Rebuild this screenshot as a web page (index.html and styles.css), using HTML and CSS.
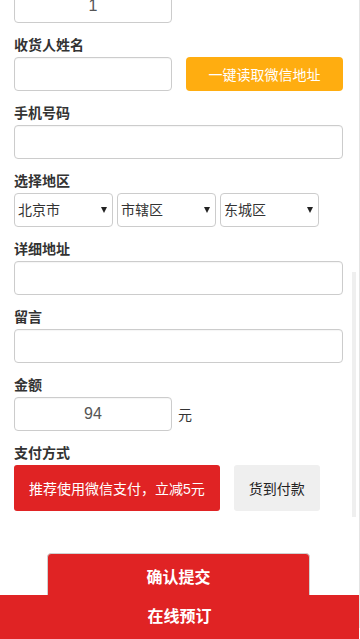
FILE: index.html
```html
<!DOCTYPE html>
<html lang="zh-CN">
<head>
  <meta charset="UTF-8" />
  <meta name="viewport" content="width=device-width, initial-scale=1" />
  <title>在线预订</title>
  <link rel="stylesheet" href="styles.css">
</head>
<body>

  <div class="page">
    <form class="order-form" novalidate>
      <div class="field field-first">
        <input type="text" class="text-input half center" value="1" />
      </div>

      <div class="field">
        <label for="name">收货人姓名</label>
        <div class="row">
          <input type="text" id="name" class="text-input half" />
          <button type="button" class="wx-btn">一键读取微信地址</button>
        </div>
      </div>

      <div class="field">
        <label for="phone">手机号码</label>
        <input type="tel" id="phone" class="text-input" />
      </div>

      <div class="field">
        <label>选择地区</label>
        <div class="row selects">
          <div class="select-box"><select><option>北京市</option></select></div>
          <div class="select-box"><select><option>市辖区</option></select></div>
          <div class="select-box"><select><option>东城区</option></select></div>
        </div>
      </div>

      <div class="field">
        <label for="address">详细地址</label>
        <input type="text" id="address" class="text-input" />
      </div>

      <div class="field">
        <label for="note">留言</label>
        <input type="text" id="note" class="text-input" />
      </div>

      <div class="field">
        <label for="amount">金额</label>
        <div class="row">
          <input type="text" id="amount" class="text-input half center" value="94" />
          <span class="unit">元</span>
        </div>
      </div>

      <div class="field">
        <label>支付方式</label>
        <div class="row pay-row">
          <button type="button" class="pay-btn active">推荐使用微信支付，立减5元</button>
          <button type="button" class="pay-btn">货到付款</button>
        </div>
      </div>

      <div class="submit-wrap">
        <button type="submit" class="submit-btn">确认提交</button>
      </div>
    </form>
  </div>

  <div class="scroll-thumb"></div>

  <div class="bottom-bar">在线预订</div>

</body>
</html>
```

FILE: styles.css
```css
* {
  box-sizing: border-box;
  margin: 0;
  padding: 0;
}

body {
  font-family: 'Liberation Sans', 'Noto Sans CJK SC', sans-serif;
  font-size: 14px;
  color: #333;
  background: #fff;
  overflow: hidden;
}

.page {
  width: 360px;
  min-height: 639px;
  padding: 0 16px 0 14px;
  border-right: 1px solid #e4e4e4;
}

/* page is scrolled a little, first field is cut off */
.order-form {
  margin-top: -11px;
}

.field {
  margin-top: 12px;
}

.field-first {
  margin-top: 0;
}

label {
  display: block;
  font-weight: 700;
  line-height: 20px;
  margin-bottom: 2px;
  color: #333;
}

.row {
  display: flex;
  align-items: center;
}

.text-input {
  display: block;
  width: 100%;
  height: 34px;
  padding: 0 10px;
  border: 1px solid #ccc;
  border-radius: 4px;
  font-family: inherit;
  font-size: 16px;
  color: #555;
  background: #fff;
  box-shadow: inset 0 1px 1px rgba(0, 0, 0, 0.04);
}

.text-input.half {
  width: 158px;
}

.text-input.center {
  text-align: center;
}

.wx-btn {
  width: 157px;
  height: 34px;
  margin-left: auto;
  border: none;
  border-radius: 4px;
  background: #ffad10;
  color: #fff;
  font-family: inherit;
  font-size: 14px;
}

.selects {
  gap: 4px;
}

.select-box {
  position: relative;
  width: 99px;
}

.select-box select {
  -webkit-appearance: none;
  appearance: none;
  width: 100%;
  height: 34px;
  padding: 0 3px;
  border: 1px solid #ccc;
  border-radius: 4px;
  background: #fff;
  font-family: inherit;
  font-size: 14px;
  color: #333;
}

.select-box::after {
  content: "";
  position: absolute;
  right: 6px;
  top: 14px;
  border-left: 3.5px solid transparent;
  border-right: 3.5px solid transparent;
  border-top: 6px solid #222;
  pointer-events: none;
}

.unit {
  margin-left: 6px;
  color: #333;
}

.pay-row {
  gap: 14px;
}

.pay-btn {
  height: 46px;
  padding: 0 15px;
  border: none;
  border-radius: 3px;
  background: #efefef;
  color: #222;
  font-family: inherit;
  font-size: 14px;
}

.pay-btn.active {
  background: #e02324;
  color: #fff;
}

.submit-wrap {
  margin-top: 42px;
  display: flex;
  justify-content: center;
}

.submit-btn {
  width: 263px;
  height: 46px;
  border: 1px solid #d0d0d0;
  border-radius: 4px;
  background: #e02324;
  color: #fff;
  font-family: inherit;
  font-size: 16px;
  font-weight: 700;
}

.scroll-thumb {
  position: fixed;
  top: 272px;
  right: 4px;
  width: 4px;
  height: 245px;
  background: #efefef;
}

.bottom-bar {
  position: fixed;
  left: 0;
  bottom: 0;
  width: 359px;
  height: 44px;
  line-height: 44px;
  background: #e02324;
  color: #fff;
  text-align: center;
  font-size: 16px;
  font-weight: 700;
}
```
